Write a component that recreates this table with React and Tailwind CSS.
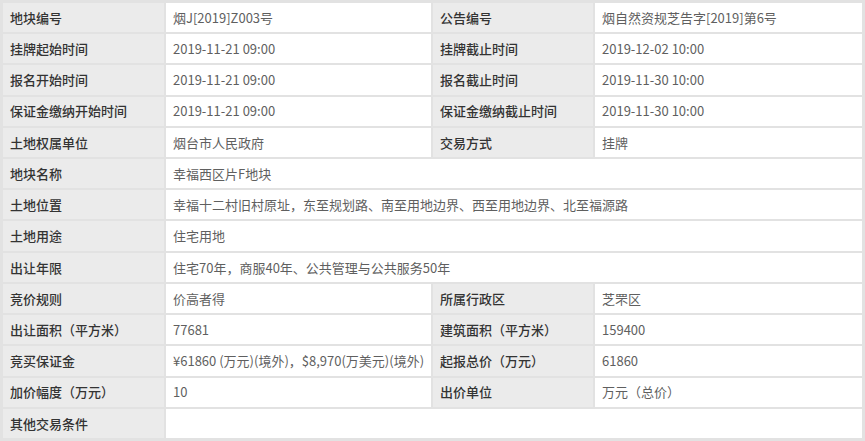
export default function App() {
  const rows = [
    ["地块编号", "烟J[2019]Z003号", "公告编号", "烟自然资规芝告字[2019]第6号"],
    ["挂牌起始时间", "2019-11-21 09:00", "挂牌截止时间", "2019-12-02 10:00"],
    ["报名开始时间", "2019-11-21 09:00", "报名截止时间", "2019-11-30 10:00"],
    ["保证金缴纳开始时间", "2019-11-21 09:00", "保证金缴纳截止时间", "2019-11-30 10:00"],
    ["土地权属单位", "烟台市人民政府", "交易方式", "挂牌"],
    ["地块名称", "幸福西区片F地块"],
    ["土地位置", "幸福十二村旧村原址，东至规划路、南至用地边界、西至用地边界、北至福源路"],
    ["土地用途", "住宅用地"],
    ["出让年限", "住宅70年，商服40年、公共管理与公共服务50年"],
    ["竞价规则", "价高者得", "所属行政区", "芝罘区"],
    ["出让面积（平方米）", "77681", "建筑面积（平方米）", "159400"],
    ["竞买保证金", "¥61860 (万元)(境外)，$8,970(万美元)(境外)", "起报总价（万元）", "61860"],
    ["加价幅度（万元）", "10", "出价单位", "万元（总价）"],
    ["其他交易条件", ""],
  ];
  const label = "bg-[#ebebeb] text-[#333] font-medium px-[7px] flex items-center whitespace-nowrap";
  const value = "bg-white text-[#5f5f5f] px-[7px] flex items-center whitespace-nowrap";
  return (
    <div
      className="w-[865px] h-[441px] bg-[#e2e2e2] p-[3px] grid grid-cols-[161px_265px_160px_1fr] grid-rows-[repeat(14,1fr)] gap-[2px] text-[13px]"
      style={{ fontFamily: '"Noto Sans CJK SC", "Noto Sans", sans-serif' }}
    >
      {rows.map((r, i) =>
        r.length === 4 ? (
          [
            <div key={i + "a"} className={label}>{r[0]}</div>,
            <div key={i + "b"} className={value}>{r[1]}</div>,
            <div key={i + "c"} className={label}>{r[2]}</div>,
            <div key={i + "d"} className={value}>{r[3]}</div>,
          ]
        ) : (
          [
            <div key={i + "a"} className={label}>{r[0]}</div>,
            <div key={i + "b"} className={value + " col-span-3"}>{r[1]}</div>,
          ]
        )
      )}
    </div>
  );
}
